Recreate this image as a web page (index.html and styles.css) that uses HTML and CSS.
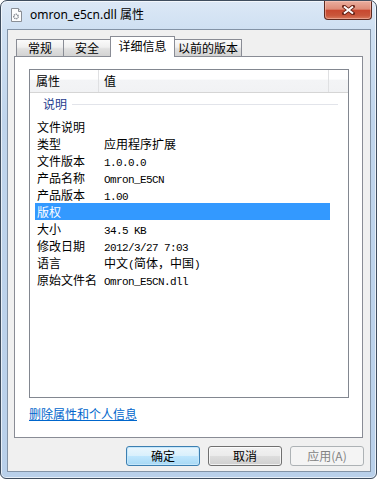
FILE: index.html
```html
<!DOCTYPE html>
<html lang="zh-CN">
<head>
<meta charset="utf-8">
<title>omron_e5cn.dll 属性</title>
<link rel="stylesheet" href="styles.css">
</head>
<body>
<div class="window">
  <div class="titlebar">
    <svg class="ticon" width="11" height="14" viewBox="0 0 11 14">
      <path d="M0.5 0.5h7l3 3v10h-10z" fill="#fdfdfd" stroke="#8a8f96"/>
      <path d="M7.5 0.5v3h3" fill="#e4e4e4" stroke="#8a8f96"/>
      <circle cx="5" cy="8.5" r="2.2" fill="none" stroke="#7d838b" stroke-width="1.5" stroke-dasharray="1.1 0.7"/>
    </svg>
    <span class="title">omron_e5cn.dll 属性</span>
    <div class="close">
      <svg width="13" height="10" viewBox="0 0 13 10">
        <path d="M2 1.5l9 7M11 1.5l-9 7" stroke="#6a2418" stroke-width="3.8" stroke-linecap="square"/>
        <path d="M2 1.5l9 7M11 1.5l-9 7" stroke="#ffffff" stroke-width="2"/>
      </svg>
    </div>
  </div>
  <div class="client">
    <div class="tabs">
      <div class="tab t1">常规</div>
      <div class="tab t2">安全</div>
      <div class="tab sel">详细信息</div>
      <div class="tab t4">以前的版本</div>
    </div>
    <div class="panel">
      <div class="list">
        <div class="lhead">
          <div class="hc c1">属性</div>
          <div class="hc c2">值</div>
          <div class="hc c3"></div>
        </div>
        <div class="group"><span class="gtext">说明</span><i class="gline"></i></div>
        <div class="rows">
          <div class="row"><span class="k">文件说明</span><span class="v"></span></div>
          <div class="row"><span class="k">类型</span><span class="v">应用程序扩展</span></div>
          <div class="row"><span class="k">文件版本</span><span class="v"><span class="m">1.0.0.0</span></span></div>
          <div class="row"><span class="k">产品名称</span><span class="v"><span class="m">Omron_E5CN</span></span></div>
          <div class="row"><span class="k">产品版本</span><span class="v"><span class="m">1.00</span></span></div>
          <div class="row hl"><span class="k">版权</span><span class="v"></span></div>
          <div class="row"><span class="k">大小</span><span class="v"><span class="m">34.5 KB</span></span></div>
          <div class="row"><span class="k">修改日期</span><span class="v"><span class="m">2012/3/27 7:03</span></span></div>
          <div class="row"><span class="k">语言</span><span class="v">中文<span class="m">(</span>简体，中国<span class="m">)</span></span></div>
          <div class="row"><span class="k">原始文件名</span><span class="v"><span class="m">Omron_E5CN.dll</span></span></div>
        </div>
      </div>
      <a class="link" href="#">删除属性和个人信息</a>
    </div>
    <div class="buttons">
      <button class="btn def">确定</button>
      <button class="btn">取消</button>
      <button class="btn dis">应用(A)</button>
    </div>
  </div>
</div>
</body>
</html>
```
FILE: styles.css
```css
html, body {
  margin: 0;
  padding: 0;
  background: #ffffff;
}

.window {
  width: 377px;
  height: 479px;
  box-sizing: border-box;
  border: 1px solid #3f4d5e;
  border-radius: 7px 7px 6px 6px;
  background: linear-gradient(to bottom, #dce8f6 0px, #cfe0f2 28px, #c0d5ec 120px, #b9d0ea 100%);
  box-shadow: inset 0 0 0 1px rgba(255, 255, 255, 0.65);
  display: flex;
  flex-direction: column;
  overflow: hidden;
  font-family: "Noto Sans CJK SC", sans-serif;
}

.titlebar {
  height: 28px;
  display: flex;
  align-items: center;
  padding-left: 10px;
  flex: none;
}

.ticon {
  flex: none;
  margin-right: 8px;
}

.title {
  font-family: "Noto Sans", "Noto Sans CJK SC", sans-serif;
  font-size: 12px;
  line-height: 16px;
  color: #000000;
}

.close {
  margin-left: auto;
  margin-right: 4px;
  align-self: flex-start;
  width: 48px;
  height: 19px;
  box-sizing: border-box;
  border: 1px solid #5e2a20;
  border-top: none;
  border-radius: 0 0 4px 4px;
  background: linear-gradient(to bottom, #e9ae9f 0%, #de8c78 45%, #c8482f 52%, #c9563b 80%, #d97a5d 100%);
  box-shadow: inset 0 0 0 1px rgba(255, 210, 200, 0.45);
  display: flex;
  align-items: center;
  justify-content: center;
}

.client {
  margin: 0 5px 6px 6px;
  border: 1px solid #8393a6;
  background: #f0f0f0;
  padding: 6px 6px 5px 6px;
  display: flex;
  flex-direction: column;
  flex: 1;
}

.tabs {
  display: flex;
  align-items: flex-end;
  height: 20px;
  padding-left: 2px;
  flex: none;
}

.tab {
  box-sizing: border-box;
  height: 17px;
  border: 1px solid #898c95;
  border-bottom: none;
  font-size: 12px;
  line-height: 15px;
  text-align: center;
  color: #000;
  background: linear-gradient(to bottom, #fbfbfb 0%, #efefef 45%, #e0e0e0 55%, #d3d3d3 100%);
  white-space: nowrap;
}

.t1 { width: 48px; }
.t2 { width: 48px; margin-left: -1px; }
.t4 { width: 68px; margin-left: -1px; }

.sel {
  width: 65px;
  margin-left: -1px;
  height: 21px;
  margin-bottom: -1px;
  line-height: 17px;
  background: #ffffff;
  position: relative;
  z-index: 1;
}

.panel {
  height: 382px;
  box-sizing: border-box;
  border: 1px solid #898c95;
  background: #ffffff;
  padding: 12px 13px 0 14px;
  margin-right: 1px;
  display: flex;
  flex-direction: column;
  flex: none;
}

.list {
  height: 329px;
  box-sizing: border-box;
  border: 1px solid #828790;
  background: #ffffff;
  flex: none;
}

.lhead {
  height: 23px;
  box-sizing: border-box;
  border-bottom: 1px solid #d5d5d5;
  display: flex;
  background: linear-gradient(to bottom, #ffffff 0%, #ffffff 42%, #f3f4f6 45%, #f1f2f4 100%);
}

.hc {
  box-sizing: border-box;
  font-size: 12px;
  line-height: 22px;
  color: #000;
}

.c1 {
  width: 69px;
  padding-left: 6px;
  border-right: 1px solid #dfe0e2;
}

.c2 {
  width: 230px;
  padding-left: 5px;
  border-right: 1px solid #dfe0e2;
}

.c3 {
  flex: 1;
}

.group {
  height: 25px;
  box-sizing: border-box;
  padding: 3px 10px 6px 13px;
  display: flex;
  align-items: center;
}

.gtext {
  font-size: 12px;
  line-height: 16px;
  color: #1e3c8e;
}

.gline {
  flex: 1;
  height: 1px;
  margin-left: 5px;
  background: #e2e4ea;
}

.rows {
  margin: 0 18px 0 5px;
}

.row {
  height: 17px;
  display: grid;
  grid-template-columns: 69px 1fr;
  align-items: start;
  color: #000;
}

.k {
  font-size: 12px;
  line-height: 17px;
  height: 17px;
  padding-left: 2px;
  white-space: nowrap;
}

.v {
  font-size: 12px;
  line-height: 17px;
  height: 17px;
  overflow: hidden;
  white-space: nowrap;
}

.m {
  font-family: "Liberation Mono", monospace;
  font-size: 11px;
  line-height: 1;
  letter-spacing: -0.6px;
}

.hl {
  background: #3399ff;
  color: #ffffff;
}

.link {
  align-self: flex-start;
  margin-top: 8px;
  font-size: 12px;
  line-height: 16px;
  color: #0066cc;
  text-decoration: underline;
}

.buttons {
  display: flex;
  justify-content: flex-end;
  gap: 8px;
  margin-top: 8px;
  flex: none;
}

.btn {
  width: 74px;
  height: 20px;
  box-sizing: border-box;
  border: 1px solid #707070;
  border-radius: 3px;
  padding: 0;
  font-family: "Noto Sans CJK SC", sans-serif;
  font-size: 12px;
  line-height: 18px;
  color: #000;
  background: linear-gradient(to bottom, #f2f2f2 0%, #ebebeb 48%, #dddddd 52%, #cfcfcf 100%);
  box-shadow: inset 0 0 0 1px rgba(255, 255, 255, 0.7);
}

.def {
  border-color: #3c7fb1;
  background: linear-gradient(to bottom, #eaf6fd 0%, #d9f0fc 48%, #bee6fd 52%, #a7d9f5 100%);
  box-shadow: inset 0 0 0 1px #c5e7fb;
}

.dis {
  border-color: #adb2b5;
  background: #f4f4f4;
  color: #838383;
  box-shadow: none;
}
```
